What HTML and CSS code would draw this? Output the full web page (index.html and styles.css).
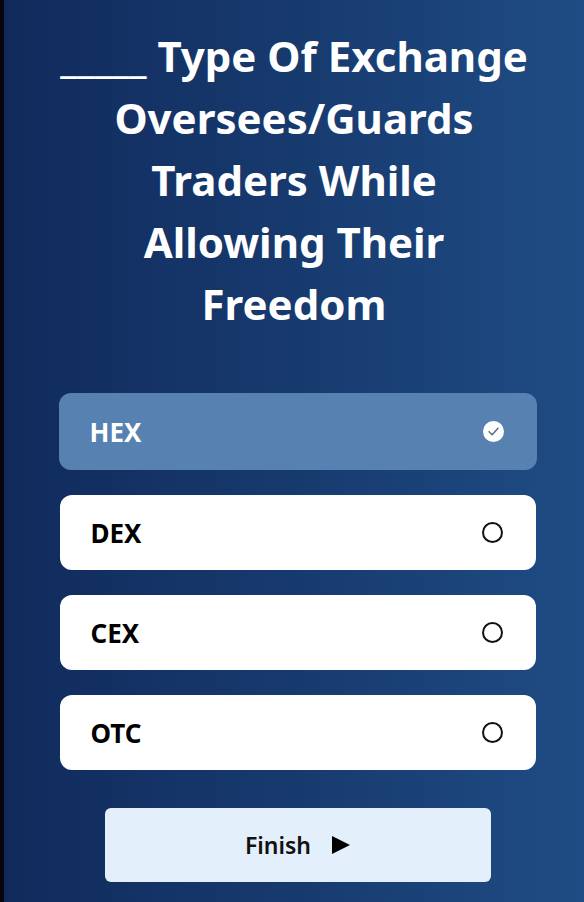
FILE: index.html
```html
<!DOCTYPE html>
<html lang="en">
<head>
    <meta charset="UTF-8">
    <meta name="viewport" content="width=device-width, initial-scale=1.0">
    <title>Quiz</title>
    <link rel="stylesheet" href="styles.css">
</head>
<body>
    <div class="edge"></div>
    <div class="quiz">
        <h1 class="question">_____ Type Of Exchange<br>Oversees/Guards<br>Traders While<br>Allowing Their<br>Freedom</h1>

        <div class="options">
            <div class="option selected">
                <span>HEX</span>
                <span class="mark">
                    <svg width="21" height="21" viewBox="0 0 20 20">
                        <circle cx="10" cy="10" r="10" fill="#ffffff"/>
                        <path d="M5.8 10.2 L8.7 13.1 L14.3 6.9" fill="none" stroke="#5a6f8c" stroke-width="1.5" stroke-linecap="round" stroke-linejoin="round"/>
                    </svg>
                </span>
            </div>
            <div class="option">
                <span>DEX</span>
                <span class="mark"><span class="ring"></span></span>
            </div>
            <div class="option">
                <span>CEX</span>
                <span class="mark"><span class="ring"></span></span>
            </div>
            <div class="option">
                <span>OTC</span>
                <span class="mark"><span class="ring"></span></span>
            </div>
        </div>

        <button type="button" class="finish">
            Finish
            <svg width="20" height="20" viewBox="0 0 20 20">
                <path d="M1 1 L19 10 L1 19 Z" fill="#000000"/>
            </svg>
        </button>
    </div>
</body>
</html>
```

FILE: styles.css
```css
html, body {
    height: 100%;
}

body {
    margin: 0;
    display: flex;
    font-family: "Noto Sans", "Open Sans", sans-serif;
    background: linear-gradient(90deg, #112a5c 0%, #173a6e 50%, #1f4c84 100%);
    overflow: hidden;
}

.edge {
    width: 4px;
    flex-shrink: 0;
    background-color: #05070d;
}

.quiz {
    flex: 1;
    display: flex;
    flex-direction: column;
    align-items: center;
    padding: 25px 0 0 0;
}

.question {
    margin: 0;
    width: 500px;
    color: #ffffff;
    font-size: 42px;
    font-weight: 700;
    line-height: 62px;
    text-align: center;
}

.options {
    display: flex;
    flex-direction: column;
    gap: 25px;
    margin-top: 58px;
    margin-left: 7px;
    width: 476px;
}

.option {
    height: 75px;
    display: flex;
    align-items: center;
    justify-content: space-between;
    padding: 0 33px 0 31px;
    background-color: #ffffff;
    border-radius: 12px;
    font-size: 26px;
    font-weight: 700;
    color: #000000;
}

.option.selected {
    background-color: #5781b1;
    color: #ffffff;
    margin: 0 -1px;
    height: 77px;
}

.mark {
    display: flex;
}

.ring {
    width: 17px;
    height: 17px;
    border: 2px solid #111111;
    border-radius: 50%;
}

.finish {
    margin-top: 38px;
    margin-left: 8px;
    width: 386px;
    height: 74px;
    display: flex;
    align-items: center;
    justify-content: center;
    gap: 20px;
    border: none;
    border-radius: 6px;
    background-color: #e3effa;
    color: #111111;
    font-family: inherit;
    font-size: 23px;
    font-weight: 600;
}
```
